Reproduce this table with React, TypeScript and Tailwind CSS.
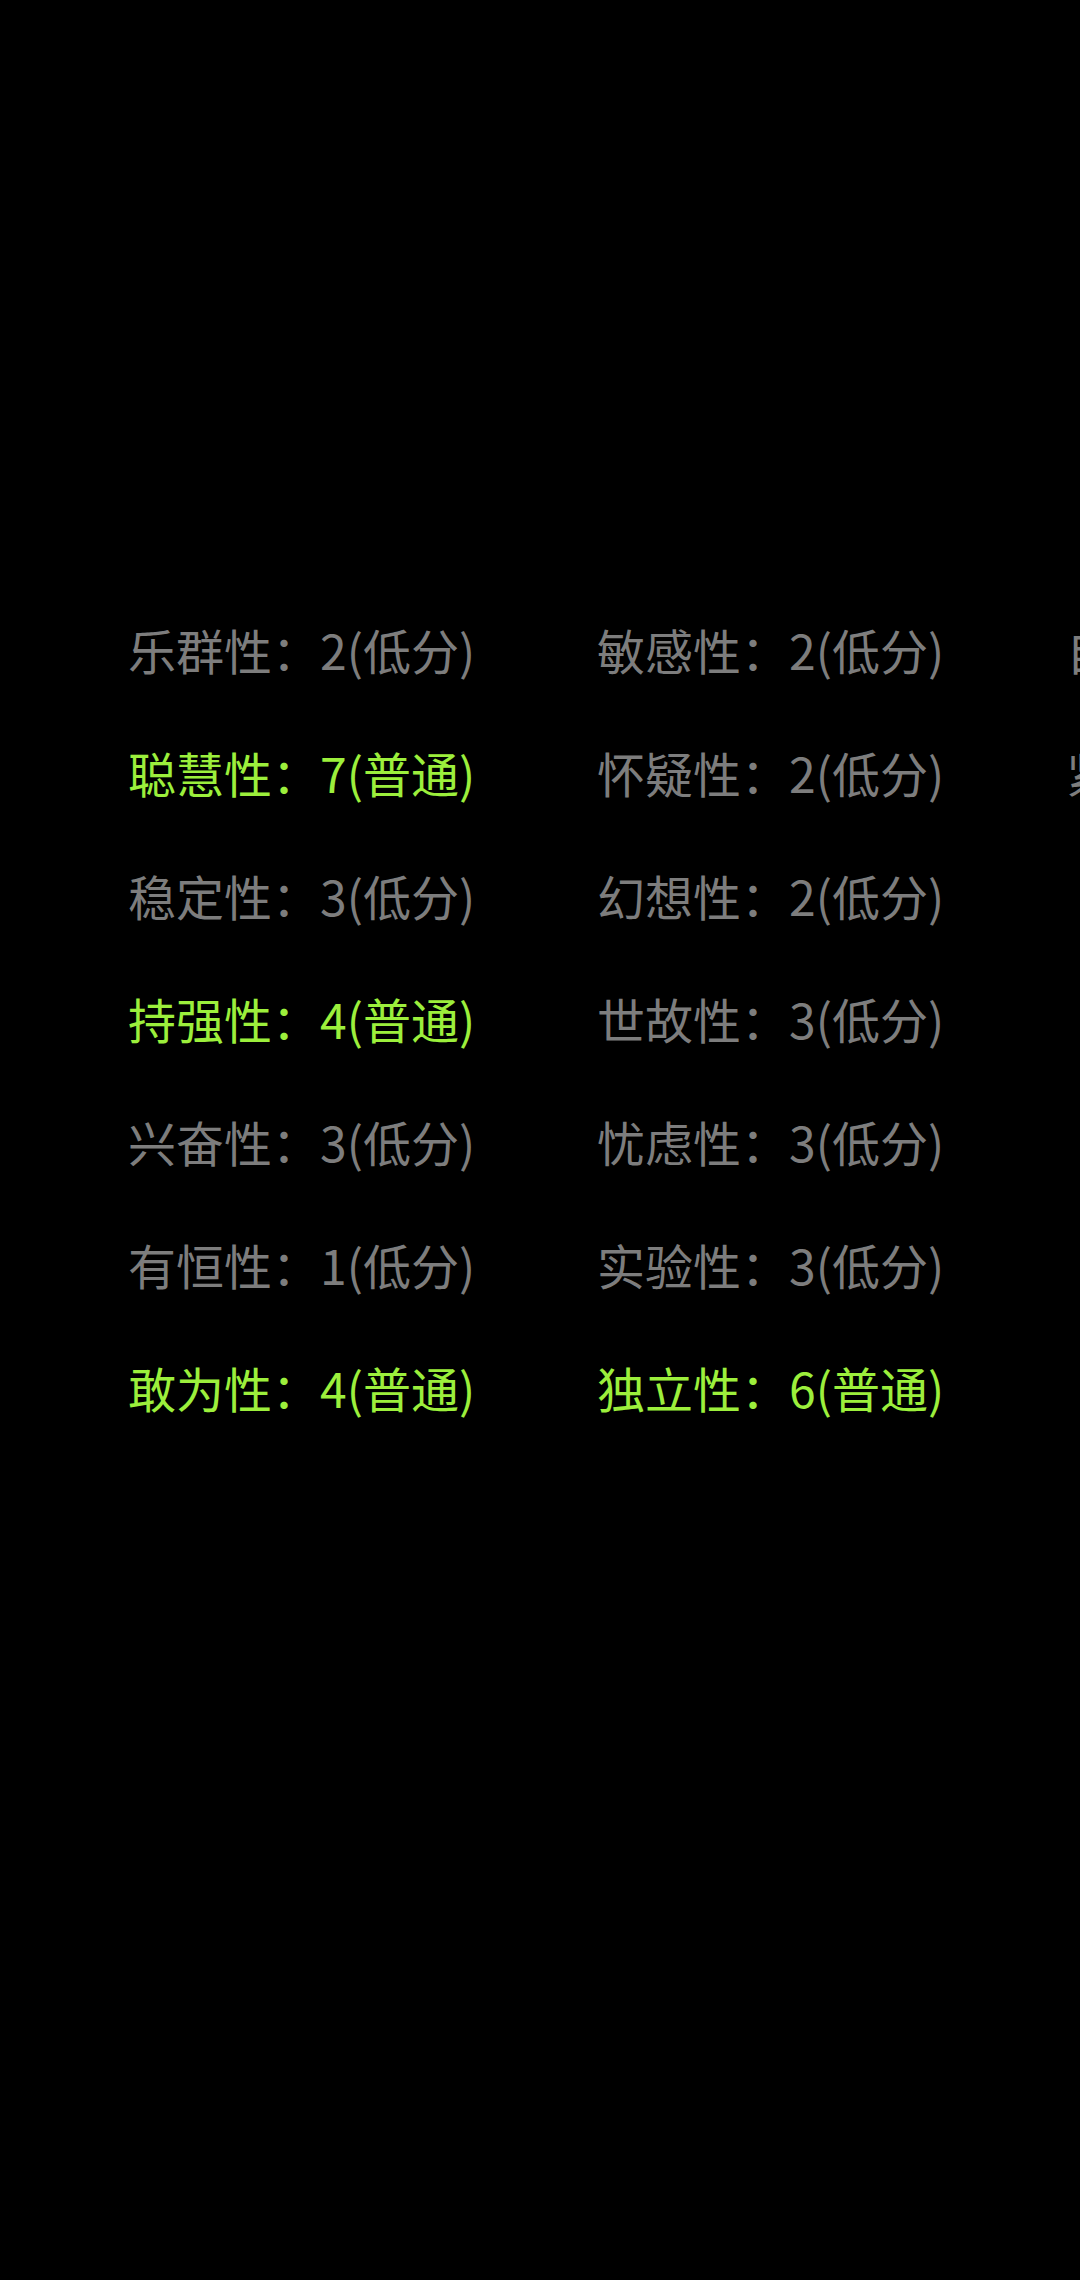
const columns = [
  [
    { label: "乐群性", score: 2, level: "低分" },
    { label: "聪慧性", score: 7, level: "普通" },
    { label: "稳定性", score: 3, level: "低分" },
    { label: "持强性", score: 4, level: "普通" },
    { label: "兴奋性", score: 3, level: "低分" },
    { label: "有恒性", score: 1, level: "低分" },
    { label: "敢为性", score: 4, level: "普通" },
  ],
  [
    { label: "敏感性", score: 2, level: "低分" },
    { label: "怀疑性", score: 2, level: "低分" },
    { label: "幻想性", score: 2, level: "低分" },
    { label: "世故性", score: 3, level: "低分" },
    { label: "忧虑性", score: 3, level: "低分" },
    { label: "实验性", score: 3, level: "低分" },
    { label: "独立性", score: 6, level: "普通" },
  ],
  [
    { label: "自律性", score: 3, level: "低分" },
    { label: "紧张性", score: 3, level: "低分" },
  ],
];

export default function App() {
  return (
    <div
      className="h-[2280px] w-[1080px] overflow-hidden bg-black pl-[128px] pt-[588px]"
      style={{ fontFamily: '"Noto Sans CJK SC", "Noto Sans", sans-serif' }}
    >
      <div className="flex">
        {columns.map((col, i) => (
          <div key={i} className="w-[469px] shrink-0">
            {col.map((item) => (
              <div
                key={item.label}
                className={
                  item.level === "普通"
                    ? "whitespace-nowrap text-[48px] leading-[123px] text-[#9cef3c]"
                    : "whitespace-nowrap text-[48px] leading-[123px] text-[#7d7d7d]"
                }
              >
                {item.label}：{item.score}({item.level})
              </div>
            ))}
          </div>
        ))}
      </div>
    </div>
  );
}
